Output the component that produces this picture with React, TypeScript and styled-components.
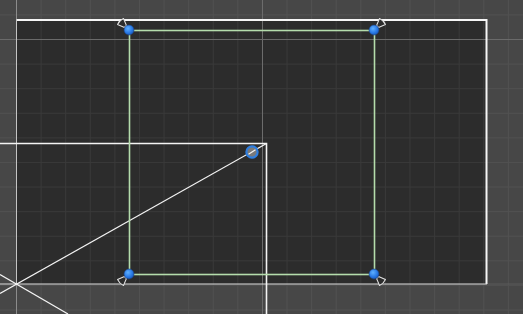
import React from 'react';
import styled, { createGlobalStyle } from 'styled-components';

const GlobalStyle = createGlobalStyle`
  html, body {
    margin: 0;
    padding: 0;
    background: #474747;
    overflow: hidden;
    font-family: "Liberation Sans", Arial, sans-serif;
  }
`;

const GRID = 24.6;

const Scene = styled.div`
  position: relative;
  width: 523px;
  height: 314px;
  box-sizing: border-box;
  padding: 19px 0 0 16px;
  background-color: #474747;
  background-image:
    linear-gradient(to right, #515151 1px, transparent 1px),
    linear-gradient(to bottom, #515151 1px, transparent 1px);
  background-size: ${GRID}px ${GRID}px;
  background-position: 16px 14.4px;
  overflow: hidden;
`;

const CameraFrame = styled.div`
  width: 471px;
  height: 265px;
  background-color: #2c2c2c;
  background-image:
    linear-gradient(to right, #393939 1px, transparent 1px),
    linear-gradient(to bottom, #393939 1px, transparent 1px);
  background-size: ${GRID}px ${GRID}px;
  background-position: 0 20px;
`;

const Overlay = styled.svg`
  position: absolute;
  left: 0;
  top: 0;
  pointer-events: none;
`;

type Pt = { x: number; y: number; angle: number };

const corners: Pt[] = [
  { x: 129, y: 30, angle: 225 },
  { x: 374, y: 30, angle: 315 },
  { x: 129, y: 274, angle: 135 },
  { x: 374, y: 274, angle: 45 },
];

const Handle: React.FC<Pt> = ({ x, y, angle }) => (
  <g>
    <g transform={`translate(${x} ${y}) rotate(${angle})`}>
      <path
        d="M5 -1.4 L12 -4.2 Q13.6 0 12 4.2 L5 1.4 Z"
        fill="#2c2c2c"
        stroke="#e4e4e4"
        strokeWidth="1"
        strokeLinejoin="round"
      />
    </g>
    <circle cx={x} cy={y} r={5} fill="url(#dot)" stroke="#1c3f7a" strokeWidth="0.6" />
  </g>
);

export default function App() {
  return (
    <>
      <GlobalStyle />
      <Scene>
        <CameraFrame />
        <Overlay width={523} height={314} viewBox="0 0 523 314">
          <defs>
            <radialGradient id="dot" cx="0.4" cy="0.35" r="0.7">
              <stop offset="0" stopColor="#5fb0ff" />
              <stop offset="0.6" stopColor="#2a7ae6" />
              <stop offset="1" stopColor="#1656b8" />
            </radialGradient>
          </defs>

          {/* axis lines */}
          <line x1={16.5} y1={0} x2={16.5} y2={314} stroke="#8c8c8c" strokeWidth="1" />
          <line x1={262.5} y1={0} x2={262.5} y2={314} stroke="#6c6c6c" strokeWidth="1" />
          <line x1={0} y1={39.5} x2={523} y2={39.5} stroke="#6a6a6a" strokeWidth="1" />
          <line x1={487} y1={284} x2={523} y2={284} stroke="#5a5a5a" strokeWidth="1" />

          {/* camera frame border */}
          <path d="M16.5 20 H486.5 V284" fill="none" stroke="#f6f6f6" strokeWidth="2" />
          <line x1={0} y1={284} x2={487} y2={284} stroke="#dcdcdc" strokeWidth="1.2" />
          <line x1={16.5} y1={20} x2={16.5} y2={284} stroke="#c4c4c4" strokeWidth="1" />

          {/* frustum lines */}
          <path d="M0 143.5 H266.5 V314" fill="none" stroke="#f4f4f4" strokeWidth="1.6" />
          <line x1={266.5} y1={143.5} x2={0} y2={293.5} stroke="#f4f4f4" strokeWidth="1.2" />
          <line x1={0} y1={274.5} x2={68} y2={314} stroke="#f4f4f4" strokeWidth="1.2" />

          {/* rect selection */}
          <rect x={129.5} y={30.5} width={245} height={244} fill="none" stroke="#b4dcac" strokeWidth="1.6" />
          {corners.map((c) => (
            <Handle key={`${c.x}-${c.y}`} {...c} />
          ))}

          {/* pivot gizmo */}
          <circle cx={252} cy={152} r={5.6} fill="#7a7a7a" stroke="#2f7fe0" strokeWidth="2.2" />
          <line x1={248.5} y1={154.2} x2={255.5} y2={149.8} stroke="#f4f4f4" strokeWidth="1.2" />
        </Overlay>
      </Scene>
    </>
  );
}
